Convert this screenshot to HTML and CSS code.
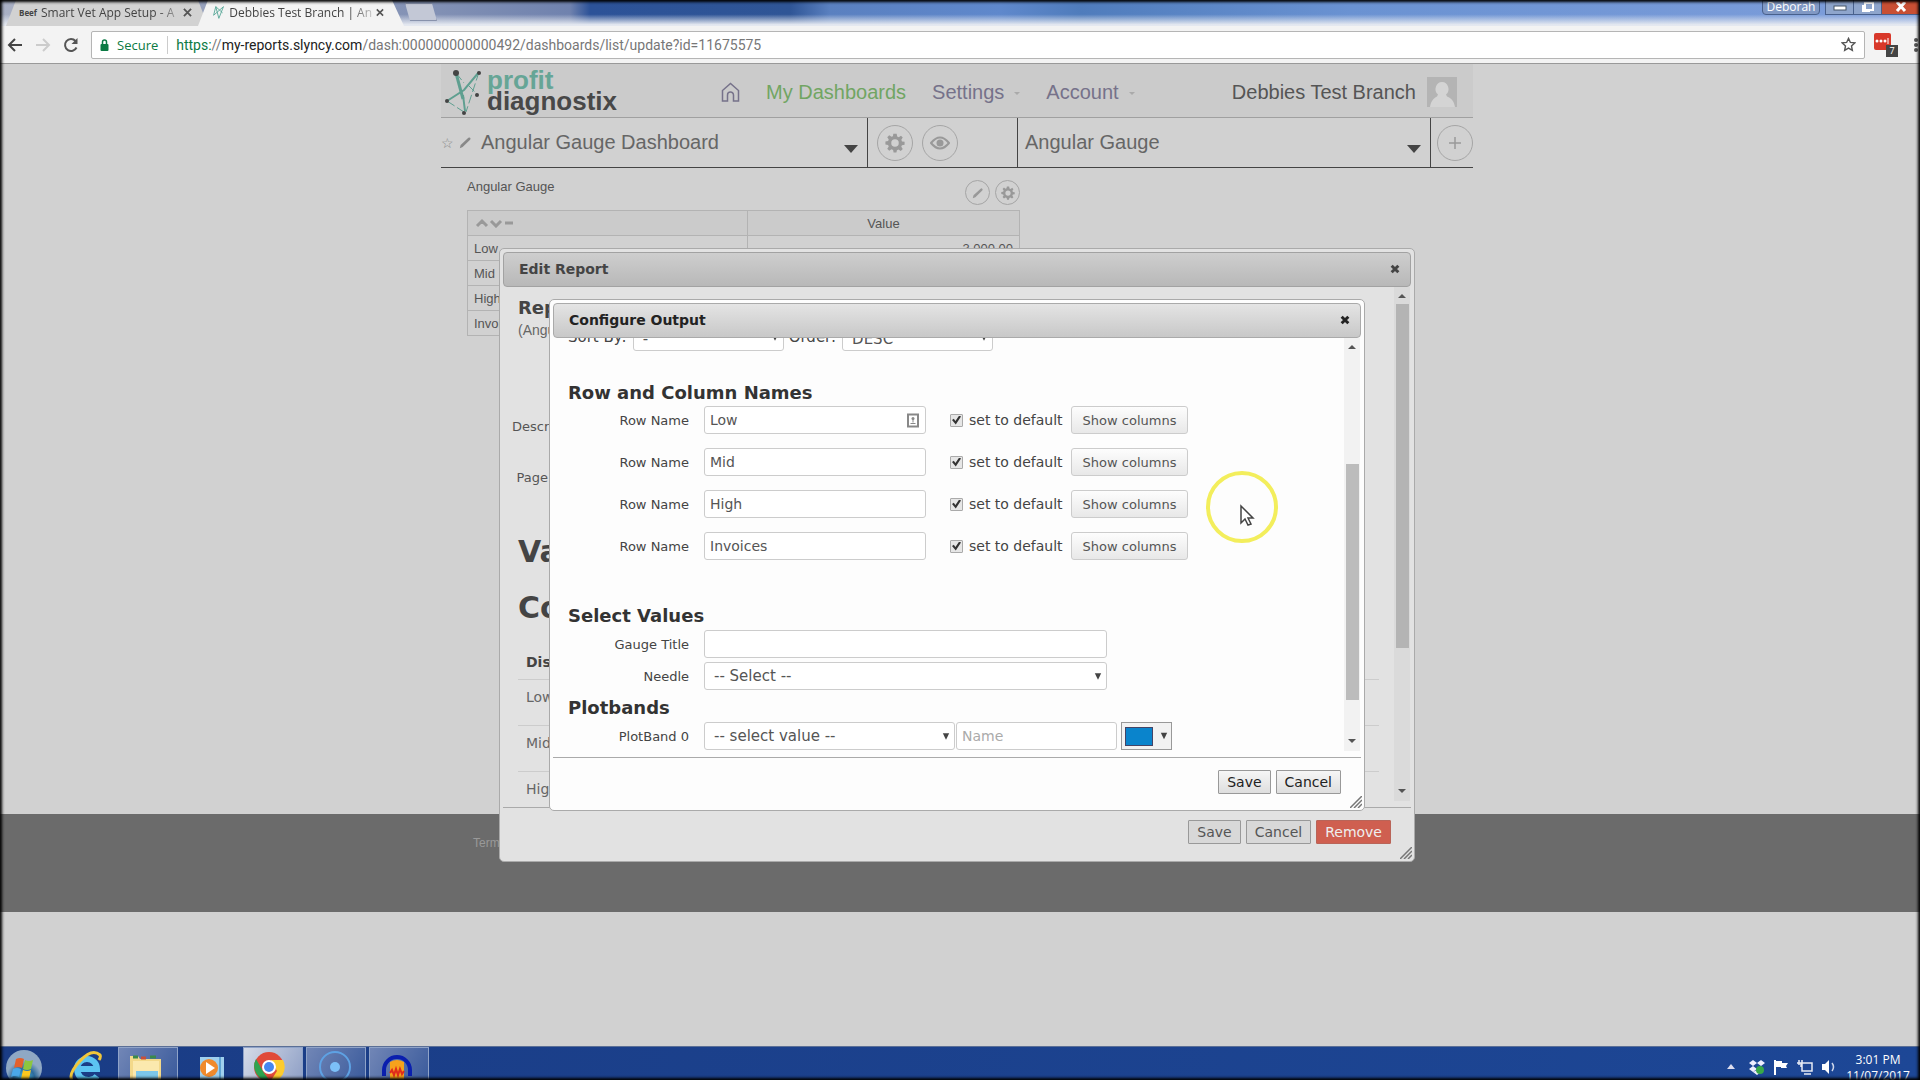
FILE: index.html
```html
<!DOCTYPE html>
<html lang="en">
<head>
<meta charset="utf-8">
<title>Debbies Test Branch | Angular Gauge Dashboard</title>
<link rel="stylesheet" href="styles.css">
</head>
<body>
<svg class="defs" aria-hidden="true">
  <symbol id="gear" viewBox="0 0 24 24"><path fill="currentColor" fill-rule="evenodd" d="M10 1h4l.6 3.3 1.9.8L19.200 3.200l2.100 2.300-1.700 2.700.8 1.900L23.500 10.500v3.500l-3.200.6-.8 1.900 1.800 2.700-2.400 2.400-2.700-1.800-1.900.8L13.700 23.500h-3.400l-.6-3.100-1.900-.8-2.700 1.800-2.400-2.400 1.800-2.700-.8-1.900L.5 13.700v-3.400l3.200-.6.8-1.900-1.800-2.700 2.400-2.400 2.700 1.800 1.700-.6zM12 7.500a4.500 4.500 0 1 0 0 9 4.500 4.500 0 0 0 0-9z"/></symbol>
  <symbol id="pencil" viewBox="0 0 16 16"><path fill="currentColor" d="M1 15l1-4L11.500 2.300a1.500 1.500 0 0 1 2.200 2.200L4.500 13.500z"/></symbol>
  <symbol id="down" viewBox="0 0 10 8"><path fill="currentColor" d="M1 0h8L5 8z"/></symbol>
  <symbol id="cross" viewBox="0 0 12 12"><path stroke="currentColor" stroke-width="3.500" d="M2 2l8 8M10 2l-8 8"/></symbol>
  <symbol id="close" viewBox="0 0 10 10"><path stroke="currentColor" stroke-width="2" d="M1 1l8 8M9 1L1 9"/></symbol>
  <symbol id="grip" viewBox="0 0 12 12"><path stroke="currentColor" stroke-width="1.500" d="M0 12L12 0M4 12l8-8M8 12l4-4"/></symbol>
</svg>

<header class="browser">
  <div class="titlebar">
    <div class="tab"><span class="fav-beef">Beef</span><span class="tab-text">Smart Vet App Setup - A</span><svg class="tab-x"><use href="#close"/></svg></div>
    <div class="tab tab-active"><svg class="fav" viewBox="0 0 40 46"><g stroke="#5aa899" stroke-width="3" fill="none"><path d="M9 4l10 38L34 4 2 32zM9 4l22 20"/></g></svg><span class="tab-text">Debbies Test Branch | An</span><svg class="tab-x"><use href="#close"/></svg></div>
    <div class="new-tab"></div>
    <div class="caption">
      <span class="user">Deborah</span>
      <span class="win-buttons">
        <button class="win" aria-label="Minimise"><svg viewBox="0 0 14 10"><rect x="1" y="4" width="12" height="4" fill="#fff" stroke="#456"/></svg></button>
        <button class="win" aria-label="Restore"><svg viewBox="0 0 14 10"><path d="M4 1h8v7H4zM2 3v6h7" fill="none" stroke="#fff" stroke-width="2"/></svg></button>
        <button class="win win-close" aria-label="Close"><svg viewBox="0 0 14 10"><path d="M3 0l8 9M11 0L3 9" stroke="#fff" stroke-width="3"/></svg></button>
      </span>
    </div>
  </div>
  <div class="toolbar">
    <button class="nav-btn" aria-label="Back"><svg viewBox="0 0 16 16"><path d="M15 8H2M8 2L2 8l6 6" fill="none" stroke="#444" stroke-width="2"/></svg></button>
    <button class="nav-btn" aria-label="Forward"><svg viewBox="0 0 16 16"><path d="M1 8h13M8 2l6 6-6 6" fill="none" stroke="#ccc" stroke-width="2"/></svg></button>
    <button class="nav-btn" aria-label="Reload"><svg viewBox="0 0 16 16"><path d="M13.500 10.500A6 6 0 1 1 12.500 4" fill="none" stroke="#555" stroke-width="2"/><path d="M14.500 1v6h-6z" fill="#555"/></svg></button>
    <div class="omnibox">
      <svg class="lock" viewBox="0 0 8 12"><rect y="5" width="8" height="7" rx="1" fill="#0b7a43"/><path d="M2 5V3a2 2 0 0 1 4 0v2" fill="none" stroke="#0b7a43" stroke-width="1.500"/></svg>
      <span class="secure">Secure</span>
      <span class="url"><span class="scheme">https:</span>//<b>my-reports.slyncy.com</b>/dash:000000000000492/dashboards/list/update?id=11675575</span>
      <svg class="star" viewBox="0 0 16 16"><path d="M8 1.500l2 4.300 4.600.5-3.400 3.200.9 4.700L8 11.900l-4.100 2.300.9-4.700L1.400 6.300 6 5.800z" fill="none" stroke="#555" stroke-width="1.500"/></svg>
    </div>
    <div class="ext"><svg class="ext-icon" viewBox="0 0 17 17"><rect width="17" height="17" rx="2" fill="#d8382a"/><g fill="#fff"><circle cx="3" cy="8" r="1.500"/><circle cx="7" cy="8" r="1.500"/><circle cx="11" cy="8" r="1.500"/><path d="M13.500 5h1v6h-1z"/></g></svg><span class="ext-badge">7</span></div>
    <svg class="menu-dots" viewBox="0 0 4 16"><circle cx="2" cy="3" r="2"/><circle cx="2" cy="8" r="2"/><circle cx="2" cy="13" r="2"/></svg>
  </div>
</header>

<main class="viewport">
  <div class="container">
    <div class="site-header">
      <a class="logo" href="#">
        <svg viewBox="0 0 36 46"><g stroke="#5f9f90" fill="none"><path stroke-width="3" d="M11 4l7 26"/><path stroke-width="2" d="M18 26l2 16M34 3L19 21 2 32"/><path stroke-width="1" d="M11 4l8 10M23 16l9 9M2 32l17 11M34 3L21 43" stroke-dasharray="9 3"/></g><g fill="#444"><circle cx="11" cy="4" r="3"/><circle cx="34" cy="4" r="2"/><circle cx="2" cy="32" r="2"/><circle cx="32" cy="26" r="2"/><circle cx="19" cy="44" r="2"/></g></svg>
        <span class="logo-text"><span class="teal">profit</span><span>diagnostix</span></span>
      </a>
      <nav class="menu">
        <a href="#" aria-label="Home"><svg class="home" viewBox="0 0 19 20"><path d="M1.500 8.500L9.500 1.500l8 7V19h-5v-6a3 3 0 0 0-6 0v6h-5z" fill="none" stroke="#76728a" stroke-width="1.500"/></svg></a>
        <a href="#" class="current">My Dashboards</a>
        <a href="#">Settings<i class="caret"></i></a>
        <a href="#">Account<i class="caret"></i></a>
      </nav>
      <span class="branch">Debbies Test Branch</span>
      <svg class="avatar" viewBox="0 0 30 30"><rect width="30" height="30" fill="#b4b4b4"/><path fill="#d4d4d4" d="M15 5a6.500 7 0 0 1 4 12.500l1 2c5 2 7 5 8 10.500H3c1-5.500 3-8.500 7-10.500l1-2A6.500 7 0 0 1 15 5z"/></svg>
    </div>
    <div class="dash-bar">
      <div class="cell"><span class="star-small">☆</span><svg class="pen"><use href="#pencil"/></svg><span>Angular Gauge Dashboard</span><i class="tri"></i></div>
      <div class="cell cell-tools">
        <button class="round" aria-label="Settings"><svg class="i20"><use href="#gear"/></svg></button>
        <button class="round" aria-label="View"><svg class="i20" viewBox="0 0 20 14"><path d="M1 7q9-11 18 0-9 11-18 0z" fill="none" stroke="currentColor" stroke-width="2"/><circle cx="10" cy="7" r="3.500" fill="currentColor"/></svg></button>
      </div>
      <div class="cell cell-report"><span>Angular Gauge</span><i class="tri"></i></div>
      <div class="cell cell-add"><button class="round" aria-label="Add"><svg class="i14" viewBox="0 0 14 14"><path d="M7 1v12M1 7h12" stroke="currentColor" stroke-width="1.500"/></svg></button></div>
    </div>
    <section class="widget">
      <div class="widget-head"><span>Angular Gauge</span>
        <button class="round small" aria-label="Edit"><svg class="i12"><use href="#pencil"/></svg></button>
        <button class="round small" aria-label="Options"><svg class="i14"><use href="#gear"/></svg></button>
      </div>
      <table class="grid">
        <thead><tr><th class="sorter"><svg viewBox="0 0 38 10"><path d="M1 8l5-5 5 5M15 3l5 5 5-5M29 5h8" fill="none" stroke="#999" stroke-width="3"/></svg></th><th>Value</th></tr></thead>
        <tbody>
          <tr><td>Low</td><td class="num">3,000.00</td></tr>
          <tr><td>Mid</td><td></td></tr>
          <tr><td>High</td><td></td></tr>
          <tr><td>Invoices</td><td></td></tr>
        </tbody>
      </table>
    </section>
  </div>
  <footer class="site-footer"><div class="container"><a href="#">Terms</a></div></footer>

  <section class="dialog edit" role="dialog" aria-label="Edit Report">
    <div class="dialog-title"><span>Edit Report</span><button class="x" aria-label="Close"><svg><use href="#cross"/></svg></button></div>
    <div class="dialog-body">
      <div class="pane">
        <h3>Report</h3>
        <p class="sub">(Angular Gauge)</p>
        <div class="edit-label">Description</div>
        <div class="edit-label">Page Rows</div>
        <h2>Values</h2>
        <h2>Columns</h2>
        <table class="columns">
          <thead><tr><th>Display</th></tr></thead>
          <tbody><tr><td>Low</td></tr><tr><td>Mid</td></tr><tr><td>High</td></tr></tbody>
        </table>
      </div>
      <div class="scrollbar"><i class="up"></i><i class="thumb"></i><i class="dn"></i></div>
    </div>
    <div class="dialog-foot"><button class="btn">Save</button><button class="btn">Cancel</button><button class="btn btn-remove">Remove</button></div>
    <svg class="grip"><use href="#grip"/></svg>
  </section>

  <section class="dialog configure" role="dialog" aria-label="Configure Output">
    <div class="dialog-title"><span>Configure Output</span><button class="x" aria-label="Close"><svg><use href="#cross"/></svg></button></div>
    <div class="dialog-body">
      <form class="pane">
        <div class="sort">
          <label for="sort">Sort By:</label>
          <span class="select"><select id="sort"><option>-</option></select><svg><use href="#down"/></svg></span>
          <label for="order">Order:</label>
          <span class="select"><select id="order"><option>DESC</option></select><svg><use href="#down"/></svg></span>
        </div>
        <h3>Row and Column Names</h3>
        <div class="rows">
          <div class="row"><label for="r1">Row Name</label><span class="field"><input id="r1" type="text" value="Low"><svg class="fill-icon" viewBox="0 0 12 14"><rect x="1" y="1" width="10" height="12" fill="none" stroke="#888" stroke-width="2"/><circle cx="6" cy="5" r="1.500" fill="#888"/><path d="M6 5v4M3.500 10h5" stroke="#888"/></svg></span><input type="checkbox" id="c1" checked><label class="chk" for="c1">set to default</label><button type="button" class="show">Show columns</button></div>
          <div class="row"><label for="r2">Row Name</label><span class="field"><input id="r2" type="text" value="Mid"></span><input type="checkbox" id="c2" checked><label class="chk" for="c2">set to default</label><button type="button" class="show">Show columns</button></div>
          <div class="row"><label for="r3">Row Name</label><span class="field"><input id="r3" type="text" value="High"></span><input type="checkbox" id="c3" checked><label class="chk" for="c3">set to default</label><button type="button" class="show">Show columns</button></div>
          <div class="row"><label for="r4">Row Name</label><span class="field"><input id="r4" type="text" value="Invoices"></span><input type="checkbox" id="c4" checked><label class="chk" for="c4">set to default</label><button type="button" class="show">Show columns</button></div>
        </div>
        <h3 class="spaced">Select Values</h3>
        <div class="pairs">
          <label for="gt">Gauge Title</label><input id="gt" class="wide" type="text">
          <label for="nd">Needle</label><span class="select wide"><select id="nd"><option>-- Select --</option></select><svg><use href="#down"/></svg></span>
        </div>
        <h3 class="plot">Plotbands</h3>
        <div class="pairs">
          <label for="pb">PlotBand 0</label>
          <span class="band"><span class="select"><select id="pb"><option>-- select value --</option></select><svg><use href="#down"/></svg></span><input class="name" type="text" placeholder="Name" aria-label="Name"><button type="button" class="colour" aria-label="Colour"><i></i><svg><use href="#down"/></svg></button></span>
        </div>
      </form>
      <div class="scrollbar"><i class="up"></i><i class="thumb"></i><i class="dn"></i></div>
    </div>
    <div class="dialog-foot"><button class="btn">Save</button><button class="btn">Cancel</button></div>
    <svg class="grip"><use href="#grip"/></svg>
  </section>

  <svg class="pointer" viewBox="0 0 74 74"><circle cx="37" cy="37" r="34" fill="none" stroke="#f3ee5c" stroke-width="4"/><path d="M36 36v17l4-4 3 6 3-1-3-6h5z" fill="#fff" stroke="#444" stroke-width="1.500"/></svg>
</main>

<footer class="taskbar">
  <button class="task start" aria-label="Start"><svg viewBox="0 0 56 32"><defs><radialGradient id="orb" cy=".8"><stop offset="0" stop-color="#4fc3e8"/><stop offset=".6" stop-color="#2b6a9c"/><stop offset="1" stop-color="#8fa8c4"/></radialGradient></defs><circle cx="24" cy="20" r="18" fill="url(#orb)"/><path fill="#e4602c" d="M16 11q4-2 8 0l-2 9q-4-2-8 0z"/><path fill="#8cc63f" d="M25 12q4 2 8 0l-2 9q-4 2-8 0z"/><path fill="#4aa8e8" d="M13 21q4-2 8 0l-2 8q-4-2-8 0z"/><path fill="#fcc81e" d="M23 22q4 2 8 0l-2 9q-4 2-8 0z"/></svg></button>
  <button class="task" aria-label="Internet Explorer"><svg viewBox="0 0 56 32"><path d="M21 21h20a10 10 0 1 0-20 0q1 11 12 11 5 0 8-4" fill="none" stroke="#5cc4f2" stroke-width="6"/><path d="M16 32Q12 26 24 13T44 7q1 2-1 5" fill="none" stroke="#f0c63a" stroke-width="3"/></svg></button>
  <button class="task open" aria-label="Explorer"><svg viewBox="0 0 56 32"><path fill="#f3d98a" d="M11 8h8l2 3h21v21H11z"/><path fill="#fbe9ae" d="M14 13h26v19H14z"/><path d="M14 9h5M31 9h6" stroke="#3b8a4a" stroke-width="3"/><path d="M22 10h5" stroke="#c8503a" stroke-width="3"/><path fill="#7cc7ea" d="M17 23h22v9H17z"/></svg></button>
  <button class="task" aria-label="Media Player"><svg viewBox="0 0 56 32"><path fill="#9fd0ee" d="M19 9h24v23H19z"/><path fill="#5fa4d4" d="M38 9h2v23h-2z"/><circle cx="28" cy="20" r="9" fill="#f08a2c"/><path fill="#fff" d="M25 14v12l9-6z"/></svg></button>
  <button class="task open active" aria-label="Chrome"><svg viewBox="0 0 56 32"><circle cx="25" cy="19" r="15" fill="#e04a3a"/><path fill="#2ea44f" d="M12 11l8 14 6 8A15 15 0 0 1 12 11z"/><path fill="#fccb2e" d="M27 12h12a15 15 0 0 1-13 22l7-11z"/><circle cx="25" cy="19" r="7" fill="#fff"/><circle cx="25" cy="19" r="5" fill="#4687f0"/></svg></button>
  <button class="task open" aria-label="Recorder"><svg viewBox="0 0 56 32"><circle cx="28" cy="19" r="15" fill="none" stroke="#5ea2e4" stroke-width="2"/><circle cx="28" cy="19" r="5" fill="#7cc0f8"/></svg></button>
  <button class="task open" aria-label="Audacity"><svg viewBox="0 0 56 32"><path d="M14 28v-6a13 13 0 0 1 26 0v6" fill="none" stroke="#0a1fae" stroke-width="4"/><path fill="#f6a21c" d="M20 14q7-4 14 0v18H20z"/><path d="M20 25l2-3 2 5 2-6 2 6 2-6 2 5 2-3" fill="none" stroke="#e02c1c" stroke-width="2"/></svg></button>
  <div class="tray">
    <svg class="tr-up" viewBox="0 0 8 5"><path fill="#dde" d="M4 0l4 5H0z"/></svg>
    <svg viewBox="0 0 16 16"><path fill="#eef" d="M4 1l4 3-4 3-4-3zM12 1l4 3-4 3-4-3zM4 7l4 3-4 3-4-3zM8 11l4 2-4 3-4-3z"/><circle cx="11" cy="11" r="4" fill="#38a848"/></svg>
    <svg viewBox="0 0 16 16"><path d="M2 1v15" stroke="#fff" stroke-width="2"/><path fill="#fff" d="M3 2h6v2h6l-2 3 1 2H8V8H3z"/></svg>
    <svg viewBox="0 0 16 16"><path d="M5 4h10v8H5zM7 15h7M2 1v5M5 1v3M0 4h4v4" fill="none" stroke="#e6eaf4" stroke-width="1.500"/></svg>
    <svg viewBox="0 0 16 16"><path fill="#fff" d="M1 5h3l4-4v14l-4-4H1z"/><path d="M11 4q3 4 0 8" fill="none" stroke="#cdd6ea" stroke-width="1.500"/></svg>
    <div class="clock"><span>3:01 PM</span><span>11/07/2017</span></div>
  </div>
</footer>
</body>
</html>
```
FILE: styles.css
```css
* { box-sizing: border-box; }

body {
  margin: 0;
  height: 100vh;
  display: flex;
  flex-direction: column;
  overflow: hidden;
  background: #d1d1d1;
  font-family: "DejaVu Sans", sans-serif;
  font-size: 14px;
  color: #333;
}
body::after {
  content: "";
  position: fixed;
  inset: 0;
  pointer-events: none;
  box-shadow: inset 0 0 3px 2px #000;
}
.defs { position: absolute; width: 0; height: 0; }
button, input, select { font: inherit; color: inherit; margin: 0; }
button { padding: 0; }
h2, h3, p { margin: 0; }
a { color: inherit; text-decoration: none; }

/* browser frame */
.browser { border-bottom: 1px solid #999; font-family: "Open Sans", "Noto Sans", sans-serif; }
.titlebar {
  display: flex;
  height: 26px;
  padding-left: 6px;
  background:
    linear-gradient(transparent 55%, #e4e8f0 95%),
    linear-gradient(90deg, #a9b0c4 0, #8190b4 440px, #7082ae 570px, #2c5298 590px, #2f5596 790px, #5a80c0 830px, #5f88cc 1000px, #4f7cbc 1080px, #6a92d2 1350px, #7e9edb 100%);
}
.tab {
  display: flex;
  align-items: center;
  gap: 4px;
  width: 202px;
  padding: 0 16px 2px 13px;
  margin-right: -10px;
  background: #d2d2d2;
  clip-path: polygon(0 100%, 10px 0, 192px 0, 202px 100%);
  font-size: 12px;
  color: #444;
}
.tab-active { background: #f3f3f3; width: 206px; clip-path: polygon(0 100%, 10px 0, 194px 0, 206px 100%); padding: 0 20px 2px 15px; }
.tab-text { flex: 1; white-space: nowrap; -webkit-mask-image: linear-gradient(90deg, #000 85%, transparent 105%); mask-image: linear-gradient(90deg, #000 85%, transparent 105%); }
.fav { width: 14px; height: 15px; }
.fav-beef { font-size: 8px; font-weight: 700; }
.tab-x { width: 9px; height: 9px; color: #555; }
.new-tab { width: 32px; height: 18px; margin: 3px 0 0 11px; background: #c3c8d6; border: 1px solid #8892ac; clip-path: polygon(0 0, 84% 0, 100% 100%, 16% 100%); }
.caption { display: flex; align-items: flex-start; gap: 5px; margin-left: auto; }
.user { width: 58px; height: 15px; border: 1px solid #48608c; border-radius: 0 0 4px 4px; background: #8098c4; color: #fff; font-size: 12px; line-height: 12px; text-align: center; }
.win-buttons { display: flex; border: 1px solid #48608c; border-top: 0; }
.win { width: 28px; height: 14px; border: 0; border-right: 1px solid #48608c; background: #8ea5cc; }
.win svg { width: 14px; height: 10px; display: block; margin: auto; }
.win-close { width: 37px; background: #c84f34; border: 0; }
.toolbar { display: flex; align-items: center; height: 37px; padding-left: 7px; gap: 12px; background: #f3f3f3; }
.nav-btn { width: 16px; height: 16px; border: 0; background: none; }
.nav-btn svg { display: block; }
.omnibox { flex: 1; display: flex; align-items: center; height: 28px; padding: 0 8px; background: #fff; border: 1px solid #b5b5b5; border-radius: 2px; font-size: 14px; color: #777; }
.lock { width: 9px; height: 12px; margin-right: 8px; }
.secure { color: #0b7a43; padding-right: 9px; border-right: 1px solid #ccc; margin-right: 8px; font-size: 13px; }
.url { flex: 1; font-family: Roboto, sans-serif; }
.url b { font-weight: 400; color: #222; }
.scheme { color: #0b7a43; }
.star { width: 15px; height: 15px; }
.ext { display: grid; width: 24px; height: 24px; margin: 0 4px 0 -3px; }
.ext > * { grid-area: 1 / 1; }
.ext-icon { width: 17px; height: 17px; }
.ext-badge { place-self: end; width: 12px; height: 12px; background: #444; color: #fff; font-size: 9px; line-height: 12px; text-align: center; }
.menu-dots { width: 4px; height: 16px; fill: #555; margin-right: 2px; }

/* page behind the dialogs */
.viewport { position: relative; flex: 1; overflow: hidden; font-size: 13px; }
.container { max-width: 1038px; margin: 0 auto; padding-right: 6px; min-height: 750px; font-family: "Liberation Sans", Arial, sans-serif; color: #555; }
.site-header { display: flex; align-items: center; height: 54px; padding: 3px 16px 0 4px; background: #cbcbcb; border-bottom: 1px solid #a0a0a0; font-size: 20px; }
.logo { display: flex; gap: 6px; font-size: 26px; font-weight: 700; line-height: 21px; color: #484848; }
.logo svg { width: 36px; height: 46px; }
.logo-text { display: flex; flex-direction: column; padding-top: 1px; }
.teal { color: #66a596; }
.menu { display: flex; align-items: center; gap: 26px; margin-left: 104px; color: #76728a; }
.menu .current { color: #71a563; }
.home { display: block; width: 19px; height: 20px; }
.caret { display: inline-block; margin-left: 10px; vertical-align: 4px; border: 3px solid transparent; border-top-color: #aaa; border-bottom: 0; }
.branch { margin-left: auto; margin-right: 11px; }
.avatar { width: 30px; height: 30px; }
.dash-bar { display: grid; grid-template-columns: 427px 150px 1fr 42px; height: 50px; border-bottom: 1px solid #444; font-size: 20px; color: #666; }
.cell { display: flex; align-items: center; padding: 0 9px 0 0; border-right: 1px solid #444; }
.star-small { font-size: 14px; width: 18px; color: #888; }
.pen { width: 13px; height: 13px; margin-right: 9px; color: #888; }
.cell .tri { margin: 12px 0 0 auto; border: 7px solid transparent; border-top: 8px solid #444; border-bottom: 0; }
.cell-tools { padding-left: 9px; gap: 9px; }
.cell-report { padding-left: 7px; }
.cell-add { border: 0; padding: 0; justify-content: flex-end; }
.round { display: grid; place-items: center; width: 36px; height: 36px; border: 1px solid #a5a5a5; border-radius: 50%; background: none; color: #999; }
.small { width: 25px; height: 25px; }
.i20 { width: 20px; height: 20px; }
.i14 { width: 14px; height: 14px; }
.i12 { width: 12px; height: 12px; }
.widget { width: 553px; margin-left: 26px; padding-top: 11px; }
.widget-head { display: flex; gap: 5px; height: 31px; }
.widget-head span { margin-right: auto; }
.widget-head .small { margin-top: 1px; }
.grid { width: 100%; border-collapse: collapse; table-layout: fixed; }
.grid th, .grid td { height: 25px; padding: 0 6px; border: 1px solid #b3b3b3; font-weight: 400; }
.grid th { background: #cbcbcb; }
.grid .num { text-align: right; }
.grid .sorter { text-align: left; width: 280px; }
.sorter svg { display: block; width: 42px; height: 10px; }
.site-footer { background: #6b6b6b; height: 98px; }
.site-footer .container { min-height: 0; padding: 22px 0 0 32px; font-size: 12px; color: #999; }

/* dialogs */
.dialog { position: absolute; padding: 3px; border: 1px solid #aaa; border-radius: 5px; background: #fdfdfd; color: #444; }
.dialog-title { display: flex; align-items: center; height: 35px; padding: 0 10px 1px 15px; border: 1px solid #aaa; border-radius: 4px; background: linear-gradient(#e4e4e4, #c8c8c8); font-size: 14px; font-weight: 700; color: #222; }
.x { margin-left: auto; width: 10px; height: 10px; border: 0; background: none; }
.x svg { display: block; width: 10px; height: 10px; }
.dialog-body { display: flex; overflow: hidden; border-bottom: 1px solid #aaa; }
.pane { flex: 1; }
.dialog-foot { display: flex; justify-content: flex-end; gap: 5px; }
.grip { position: absolute; right: 2px; bottom: 2px; width: 12px; height: 12px; color: #777; }
.btn { height: 24px; padding: 0 8px; border: 1px solid #999; border-radius: 1px; background: linear-gradient(#f6f6f6, #dedede); font-size: 14px; color: #222; }
.scrollbar { display: flex; flex-direction: column; align-items: center; width: 16px; padding: 7px 0 8px; background: #f2f2f2; }
.up { border: 4px solid transparent; border-bottom: 4px solid #555; border-top: 0; }
.dn { margin-top: auto; border: 4px solid transparent; border-top: 4px solid #555; border-bottom: 0; }
.thumb { width: 13px; background: #bcbcbc; }
h3 { font-size: 18px; line-height: 22px; }

.edit { left: calc(50% - 461px); top: 184px; width: 916px; background: #e2e2e2; }
.edit .dialog-title { background: linear-gradient(#cecece, #b8b8b8); color: #444; border-color: #a2a2a2; }
.edit .dialog-body { height: 521px; padding-right: 1px; }
.edit .pane { padding: 10px 15px 0; }
.edit .scrollbar { background: #dadada; height: 514px; }
.edit .thumb { height: 344px; margin-top: 6px; background: #b4b4b4; }
.edit .sub { font-family: "Liberation Sans", Arial, sans-serif; font-size: 14px; line-height: 22px; color: #666; }
.edit-label { display: flex; justify-content: flex-end; width: 68px; margin-bottom: 27px; line-height: 24px; white-space: nowrap; color: #555; }
.sub + .edit-label { margin-top: 74px; }
h2 { font-size: 30px; line-height: 36px; margin: 44px 0 20px; color: #444; }
h2 + h2 { margin: 0 0 19px; }
.columns { width: 100%; border-collapse: collapse; font-size: 14px; color: #666; }
.columns th { text-align: left; height: 34px; padding: 0 8px; color: #444; }
.columns td { height: 46px; padding: 0 8px 0; border-top: 1px solid #ccc; vertical-align: top; line-height: 34px; }
.edit .dialog-foot { padding: 12px 20px 14px; gap: 5px; }
.edit .btn { background: #d8d8d8; color: #555; }
.edit .btn-remove { background: #cf5f50; border-color: #b96458; color: #eee; }

.configure { left: calc(50% - 411px); top: 235px; width: 816px; }
.configure .dialog-body { height: 420px; padding-right: 1px; }
.configure .pane { padding-left: 15px; }
.configure .scrollbar { height: 413px; }
.configure .thumb { height: 236px; margin-top: 115px; }
.sort { display: flex; align-items: center; gap: 5px; margin-top: -15px; height: 28px; font-size: 15px; }
.sort .select { width: 151px; }
.sort select { padding-top: 4px; }
.sort label { margin-right: 1px; }
.configure h3 { margin-top: 31px; color: #333; }
.rows { display: grid; gap: 14px; margin-top: 2px; }
.row { display: flex; align-items: center; }
.row > label:first-child { width: 121px; margin-right: 15px; text-align: right; font-size: 13px; }
.field { display: grid; align-items: center; width: 222px; margin-right: 24px; }
.field > * { grid-area: 1 / 1; }
.fill-icon { justify-self: end; width: 12px; height: 15px; margin-right: 7px; }
input[type=text], select { width: 100%; height: 28px; padding: 0 5px; border: 1px solid #ccc; border-radius: 3px; background: #fff; font-size: 15px; color: #555; }
input[type=text] { font-size: 14px; }
input::placeholder { color: #aaa; }
input[type=checkbox] { appearance: none; width: 13px; height: 13px; margin-right: 6px; border: 1px solid #aaa; border-radius: 1px; background: #e6e6e6; display: grid; place-items: center; }
input[type=checkbox]::before { content: ""; width: 9px; height: 9px; background: #333; clip-path: polygon(0 50%, 20% 35%, 38% 60%, 80% 0, 100% 12%, 42% 100%); }
.chk { margin-right: 5px; font-size: 14px; width: 97px; white-space: nowrap; }
.show { width: 117px; height: 28px; border: 1px solid #ccc; border-radius: 3px; background: linear-gradient(#fdfdfd, #e8e8e8); font-size: 13px; color: #555; }
.select { display: grid; align-items: center; }
.select > * { grid-area: 1 / 1; }
.select select { appearance: none; padding-left: 9px; }
.select svg { justify-self: end; width: 8px; height: 7px; margin-right: 5px; pointer-events: none; }
.configure h3.spaced { margin-top: 45px; }
.configure h3.plot { margin-top: 7px; }
.pairs { display: grid; grid-template-columns: 121px 1fr; gap: 4px 15px; align-items: center; margin-top: 3px; }
.pairs > label { text-align: right; }
.pairs .wide { width: 403px; }
.band { display: flex; gap: 1px; }
.band .select { width: 251px; }
.band .name { width: 161px; }
.colour { display: flex; align-items: center; gap: 7px; width: 51px; height: 28px; margin-left: 3px; padding-left: 3px; border: 1px solid #999; background: #f2f2f2; }
.colour i { width: 28px; height: 19px; background: #0a84cc; border: 1px solid #446; }
.colour svg { width: 8px; height: 8px; }
.configure .dialog-foot { padding: 12px 20px 13px; }

.pointer { position: absolute; left: calc(50% + 245px); top: 406px; width: 74px; height: 74px; pointer-events: none; }

/* taskbar */
.taskbar { display: flex; height: 34px; overflow: hidden; background: linear-gradient(90deg, #1a3c85, #1d4796); border-top: 1px solid #5b6f96; }
.task { width: 62px; height: 33px; border: 0; background: none; overflow: hidden; }
.task svg { display: block; width: 56px; height: 32px; }
.start { width: 56px; }
.open { width: 60px; margin-right: 3px; border: 1px solid #8fa3c8; border-bottom: 0; background: linear-gradient(120deg, #7186b6, #3b5b9c); }
.active { background: linear-gradient(120deg, #d5dbe8, #8fa0c6); }
.tray { display: flex; align-items: center; gap: 8px; margin-left: auto; padding-right: 9px; color: #fff; font-family: "Open Sans", "Noto Sans", sans-serif; font-size: 12px; }
.tray svg { width: 16px; height: 16px; margin-top: 6px; }
.tray .tr-up { width: 8px; height: 5px; margin-right: 6px; }
.clock { display: flex; flex-direction: column; align-items: center; width: 66px; line-height: 16px; margin-top: 8px; }
```
